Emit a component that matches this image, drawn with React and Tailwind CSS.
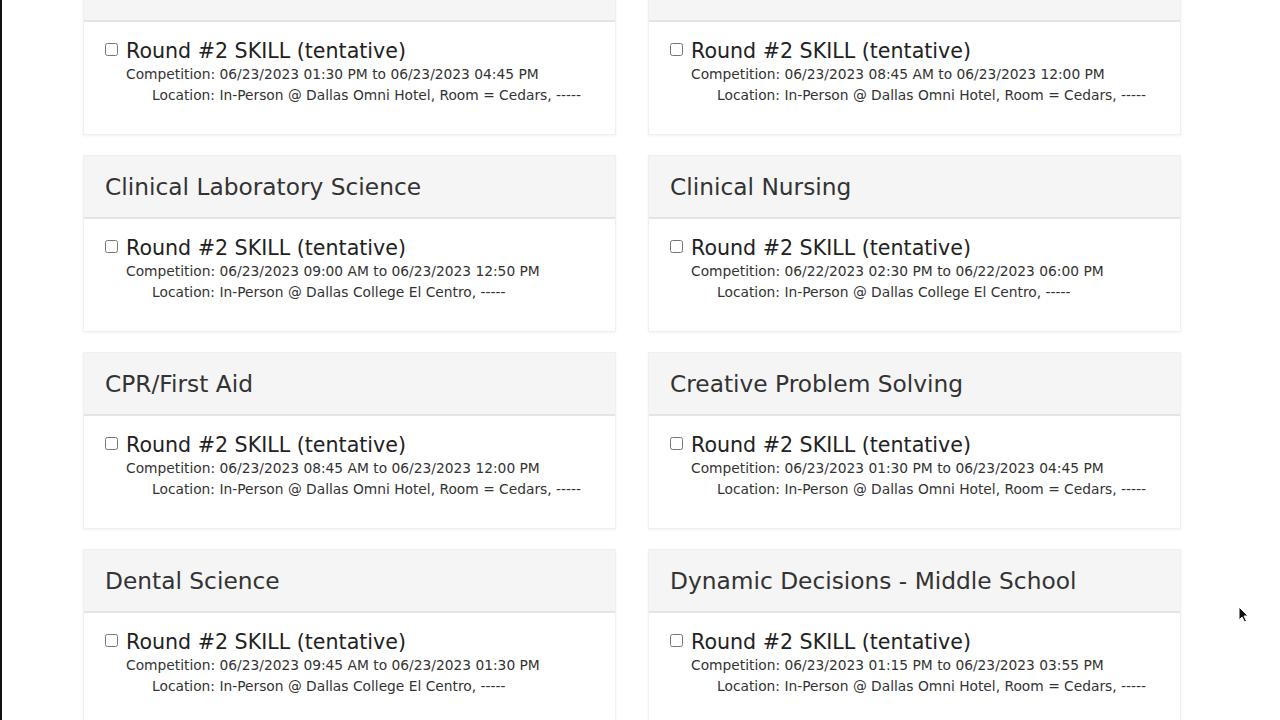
const omni = "In-Person @ Dallas Omni Hotel, Room = Cedars, -----"
const centro = "In-Person @ Dallas College El Centro, -----"

const rows = [
  [
    { title: "", start: "06/23/2023 01:30 PM", end: "06/23/2023 04:45 PM", loc: omni },
    { title: "", start: "06/23/2023 08:45 AM", end: "06/23/2023 12:00 PM", loc: omni },
  ],
  [
    { title: "Clinical Laboratory Science", start: "06/23/2023 09:00 AM", end: "06/23/2023 12:50 PM", loc: centro },
    { title: "Clinical Nursing", start: "06/22/2023 02:30 PM", end: "06/22/2023 06:00 PM", loc: centro },
  ],
  [
    { title: "CPR/First Aid", start: "06/23/2023 08:45 AM", end: "06/23/2023 12:00 PM", loc: omni },
    { title: "Creative Problem Solving", start: "06/23/2023 01:30 PM", end: "06/23/2023 04:45 PM", loc: omni },
  ],
  [
    { title: "Dental Science", start: "06/23/2023 09:45 AM", end: "06/23/2023 01:30 PM", loc: centro },
    { title: "Dynamic Decisions - Middle School", start: "06/23/2023 01:15 PM", end: "06/23/2023 03:55 PM", loc: omni },
  ],
]

function EventCard({ event }) {
  return (
    <div className="h-[177px] border border-[#efefef] bg-white shadow-[0_1px_3px_rgba(0,0,0,0.05)]">
      <div className="flex h-[63px] items-center border-b-2 border-[#e4e4e4] bg-[#f5f5f5] px-[21px] pt-[2px] text-[23.3px] text-[#333]">
        {event.title}
      </div>
      <div className="pl-[21px] pt-[17px]">
        <label className="flex items-center gap-[8px] text-[20.6px] leading-[24px] text-[#222]">
          <input type="checkbox" className="mb-[3px] h-[13px] w-[13px]" />
          Round #2 SKILL (tentative)
        </label>
        <div className="pl-[21px] pt-[1px] text-[13.8px] leading-[21px] text-[#333]">
          <div>Competition: {event.start} to {event.end}</div>
          <div className="pl-[26px]">Location: {event.loc}</div>
        </div>
      </div>
    </div>
  )
}

export default function App() {
  return (
    <div
      className="relative h-[720px] overflow-hidden border-l-2 border-[#111] bg-white"
      style={{ fontFamily: "'DejaVu Sans', Verdana, sans-serif" }}
    >
      <div className="mt-[-42px] grid grid-cols-[533px_533px] gap-x-[32px] gap-y-[20px] pl-[81px]">
        {rows.map((row, i) =>
          row.map((event, j) => <EventCard key={i + "-" + j} event={event} />)
        )}
      </div>

      {/* mouse cursor */}
      <svg className="absolute left-[1236px] top-[606px]" width="11" height="17" viewBox="0 0 11 17">
        <path d="M1 1 L1 14 L4 11 L6.5 16 L8.5 15 L6 10 L10 10 Z" fill="#111" stroke="#fff" strokeWidth="1" />
      </svg>
    </div>
  )
}
